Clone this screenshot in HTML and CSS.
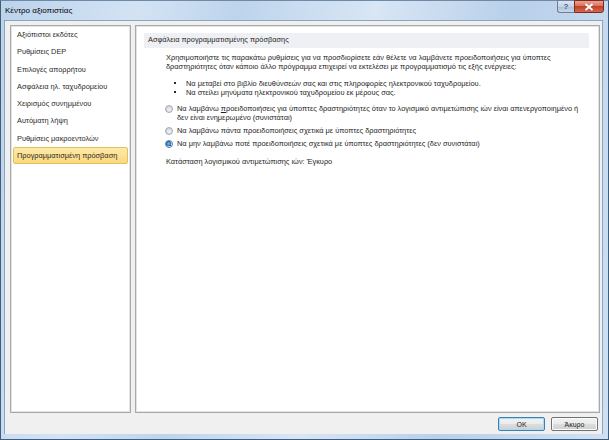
FILE: index.html
```html
<!DOCTYPE html>
<html lang="el">
<head>
<meta charset="utf-8">
<title>Κέντρο αξιοπιστίας</title>
<link rel="stylesheet" href="styles.css">
</head>
<body>
<div class="window">
  <div class="titlebar">
    <span class="title">Κέντρο αξιοπιστίας</span>
    <div class="caption-buttons">
      <span class="cap-btn help">?</span>
      <span class="cap-btn close"><svg width="10" height="8" viewBox="0 0 10 8"><path d="M1.5 1 L8.5 7 M8.5 1 L1.5 7" stroke="#fff" stroke-width="1.8" fill="none"/></svg></span>
    </div>
  </div>
  <div class="client">
    <div class="panes">
      <ul class="nav">
        <li>Αξιόπιστοι εκδότες</li>
        <li>Ρυθμίσεις DEP</li>
        <li>Επιλογές απορρήτου</li>
        <li>Ασφάλεια ηλ. ταχυδρομείου</li>
        <li>Χειρισμός συνημμένου</li>
        <li>Αυτόματη λήψη</li>
        <li>Ρυθμίσεις μακροεντολών</li>
        <li class="selected">Προγραμματισμένη πρόσβαση</li>
      </ul>
      <div class="content">
        <div class="section-head">Ασφάλεια προγραμματισμένης πρόσβασης</div>
        <div class="section-body">
          <p class="intro">Χρησιμοποιήστε τις παρακάτω ρυθμίσεις για να προσδιορίσετε εάν θέλετε να λαμβάνετε προειδοποιήσεις για ύποπτες δραστηριότητες όταν κάποιο άλλο πρόγραμμα επιχειρεί να εκτελέσει με προγραμματισμό τις εξής ενέργειες:</p>
          <ul class="bullets">
            <li>Να μεταβεί στο βιβλίο διευθύνσεών σας και στις πληροφορίες ηλεκτρονικού ταχυδρομείου.</li>
            <li>Να στείλει μηνύματα ηλεκτρονικού ταχυδρομείου εκ μέρους σας.</li>
          </ul>
          <div class="radios">
            <div class="radio-row"><span class="radio"></span><span class="radio-label">Να λαμβάνω <u>π</u>ροειδοποιήσεις για ύποπτες δραστηριότητες όταν το λογισμικό αντιμετώπισης ιών είναι απενεργοποιημένο ή δεν είναι ενημερωμένο (συνιστάται)</span></div>
            <div class="radio-row"><span class="radio"></span><span class="radio-label">Να λαμβάνω πάντα προειδοποιήσεις σχετικά με ύποπτες δραστηριότητες</span></div>
            <div class="radio-row"><span class="radio checked"></span><span class="radio-label">Να μην λαμβάνω ποτέ προειδοποιήσεις σχετικά με ύποπτες δραστηριότητες (δεν συνιστάται)</span></div>
          </div>
          <p class="status">Κατάσταση λογισμικού αντιμετώπισης ιών: Έγκυρο</p>
        </div>
      </div>
    </div>
    <div class="footer">
      <button class="btn default">OK</button>
      <button class="btn">Άκυρο</button>
    </div>
  </div>
</div>
</body>
</html>
```
FILE: styles.css
```css
html, body {
  margin: 0;
  padding: 0;
  background: #ffffff;
}
body {
  font-family: "Liberation Sans", "DejaVu Sans", sans-serif;
  font-size: 7.4px;
  color: #1e1e1e;
}
.window {
  width: 609px;
  height: 440px;
  box-sizing: border-box;
  display: flex;
  flex-direction: column;
  background: linear-gradient(100deg, #bcd3ec 0%, #d3e3f4 20%, #bed4ec 35%, #d8e6f5 55%, #b9d0ea 75%, #cfe0f2 100%);
  border: 1px solid #3f5d7d;
  border-top-color: #6f8aa7;
  padding: 0 5px 5px 3px;
}
.titlebar {
  height: 19px;
  display: flex;
  align-items: flex-start;
  justify-content: space-between;
}
.title {
  font-size: 8px;
  color: #000;
  margin-top: 5px;
  margin-left: 1px;
}
.caption-buttons {
  display: flex;
  margin-top: -1px;
  margin-right: -1px;
}
.cap-btn {
  height: 13px;
  box-sizing: border-box;
  border: 1px solid #6b7f96;
  display: flex;
  align-items: center;
  justify-content: center;
  font-size: 8px;
  font-weight: bold;
}
.help {
  width: 17px;
  border-right: none;
  border-radius: 0 0 0 3px;
  background: linear-gradient(#dbe6f3 0%, #c4d3e5 50%, #aabfd8 51%, #c9d9ec 100%);
  color: #4b5d74;
}
.close {
  width: 30px;
  border-color: #7a2a20;
  border-radius: 0 0 3px 0;
  background: linear-gradient(#e8a493 0%, #d8725f 45%, #c4402a 50%, #d06a4e 100%);
}
.client {
  flex: 1;
  background: #f0f0f0;
  display: flex;
  flex-direction: column;
  padding: 4px 2px 0 5px;
  border: 1px solid #8ba4c0;
  border-bottom: none;
}
.panes {
  display: flex;
  gap: 4px;
  height: 388px;
}
.nav {
  list-style: none;
  margin: 0;
  padding: 0 2px 0 2px;
  width: 121px;
  box-sizing: border-box;
  background: #fff;
  border: 1px solid #a9a9a9;
  box-shadow: inset 0 0 0 1px #e3e3e3;
}
.nav li {
  height: 17.3px;
  line-height: 17.5px;
  padding-left: 4px;
  color: #2a2a2a;
  box-sizing: border-box;
}
.nav li.selected {
  background: linear-gradient(#fdeaa8, #fbd97c);
  border: 1px solid #e2c064;
  border-radius: 2px;
  line-height: 15px;
  padding-left: 3px;
}
.content {
  flex: 1;
  background: #fff;
  border: 1px solid #a9a9a9;
  box-shadow: inset 0 0 0 1px #e3e3e3;
  padding: 7px 10px 0 8px;
}
.section-head {
  background: #eef0f4;
  height: 15px;
  line-height: 14px;
  padding-left: 4px;
  color: #1e1e1e;
}
.section-body {
  padding-left: 22px;
}
.intro {
  margin: 5px 0 0 0;
  line-height: 9px;
}
.bullets {
  margin: 8px 0 0 0;
  padding: 0 0 0 20px;
  line-height: 9px;
  list-style: none;
}
.bullets li {
  position: relative;
}
.bullets li::before {
  content: "";
  position: absolute;
  left: -12px;
  top: 3px;
  width: 2px;
  height: 2px;
  background: #2a2a2a;
}
.radios {
  margin-top: 7px;
  display: flex;
  flex-direction: column;
  gap: 4px;
}
.radio-row {
  display: flex;
  align-items: flex-start;
  gap: 4px;
  line-height: 9px;
}
.radio {
  flex: none;
  width: 8px;
  height: 8px;
  box-sizing: border-box;
  margin-left: -1px;
  margin-top: 0.5px;
  border-radius: 50%;
  border: 1px solid #a3a9b1;
  background: radial-gradient(circle at 60% 65%, #f4f4f4 0%, #d6d9de 60%, #c7ccd3 100%);
}
.radio.checked {
  border-color: #5a7ea8;
  background: radial-gradient(circle at 45% 45%, #7fc1ef 0%, #2f78b8 45%, #1a4f8a 55%, #e7eef6 62%, #d3dbe4 100%);
}
.status {
  margin: 9px 0 0 0;
  line-height: 9px;
}
.footer {
  flex: 1;
  display: flex;
  justify-content: flex-end;
  align-items: center;
  gap: 6px;
  padding-right: 2px;
}
.btn {
  width: 47px;
  height: 14px;
  margin-top: 1px;
  padding: 0;
  font-family: "Liberation Sans", "DejaVu Sans", sans-serif;
  font-size: 7px;
  color: #1e1e1e;
  border: 1px solid #707070;
  border-radius: 2px;
  background: linear-gradient(#f2f2f2 0%, #ebebeb 48%, #dddddd 52%, #cfcfcf 100%);
  box-shadow: inset 0 0 0 1px #fcfcfc;
}
.btn.default {
  border-color: #3c7fb1;
  box-shadow: inset 0 0 0 1px #a8dcf6;
}
```
